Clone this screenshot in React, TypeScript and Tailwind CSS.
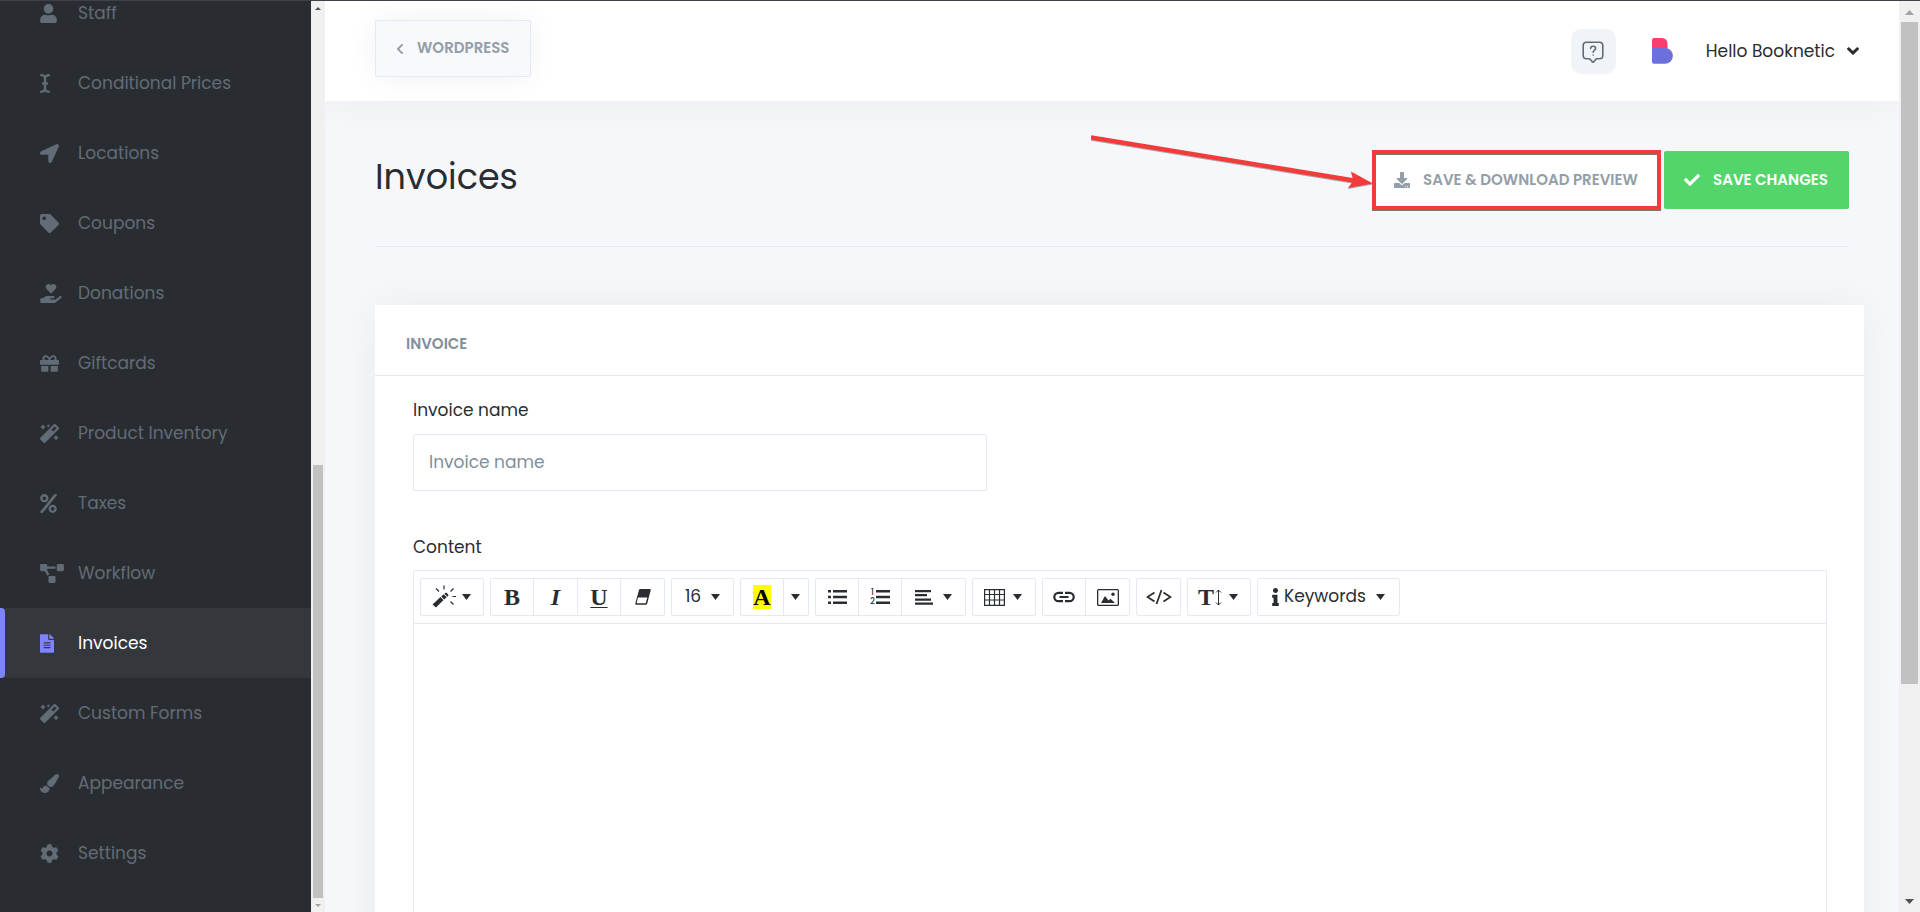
import type { ReactNode } from "react";
import type { IconType } from "react-icons";
import {
  FaAngleDown,
  FaCheck,
  FaChevronLeft,
  FaCog,
  FaDownload,
  FaFileAlt,
  FaGift,
  FaHandHoldingHeart,
  FaICursor,
  FaInfo,
  FaLocationArrow,
  FaMagic,
  FaPaintBrush,
  FaPercent,
  FaProjectDiagram,
  FaTag,
  FaUser,
} from "react-icons/fa";

const navItems: { label: string; icon: IconType; size: string; active?: boolean }[] = [
  { label: "Staff", icon: FaUser, size: "h-[19px] w-[17px]" },
  { label: "Conditional Prices", icon: FaICursor, size: "h-[19px] w-2.5" },
  { label: "Locations", icon: FaLocationArrow, size: "size-[19px]" },
  { label: "Coupons", icon: FaTag, size: "size-[19px]" },
  { label: "Donations", icon: FaHandHoldingHeart, size: "h-[19px] w-[22px]" },
  { label: "Giftcards", icon: FaGift, size: "size-[19px]" },
  { label: "Product Inventory", icon: FaMagic, size: "size-[19px]" },
  { label: "Taxes", icon: FaPercent, size: "h-[19px] w-[17px]" },
  { label: "Workflow", icon: FaProjectDiagram, size: "h-[19px] w-6" },
  { label: "Invoices", icon: FaFileAlt, size: "h-[19px] w-3.5", active: true },
  { label: "Custom Forms", icon: FaMagic, size: "size-[19px]" },
  { label: "Appearance", icon: FaPaintBrush, size: "size-[19px]" },
  { label: "Settings", icon: FaCog, size: "size-[19px]" },
];

function Sidebar() {
  return (
    <nav
      aria-label="Main"
      className="flex w-[311px] shrink-0 flex-col justify-end overflow-hidden bg-[#292d32] pb-6"
    >
      {navItems.map(({ label, icon: Icon, size, active }) => (
        <a
          key={label}
          href="#"
          aria-current={active ? "page" : undefined}
          className={
            active
              ? "relative flex h-[70px] shrink-0 items-center bg-[#34373c] pl-10 text-[17px] text-white"
              : "relative flex h-[70px] shrink-0 items-center pl-10 text-[17px] text-[#626c76]"
          }
        >
          {active && (
            <span className="absolute inset-y-0 left-0 w-[5px] rounded-r bg-[#7f83ff]" />
          )}
          <span className={active ? "w-[38px] text-[#7f83ff]" : "w-[38px]"}>
            <Icon className={size} />
          </span>
          <span className="pt-0.5">{label}</span>
        </a>
      ))}
    </nav>
  );
}

function Triangle({ up, className }: { up?: boolean; className: string }) {
  return (
    <svg
      viewBox="0 0 10 6"
      preserveAspectRatio="none"
      className={className}
      fill="currentColor"
      aria-hidden="true"
    >
      <path d={up ? "M0 6 5 0l5 6z" : "M0 0h10L5 6z"} />
    </svg>
  );
}

function SideScrollbar() {
  return (
    <div aria-hidden="true" className="flex w-3.5 shrink-0 flex-col items-center bg-[#f0f0f0]">
      <Triangle up className="my-1.5 h-[3px] w-1.5 text-[#505050]" />
      <div className="grow" />
      <div className="h-[433px] w-2.5 bg-[#c1c1c1]" />
      <Triangle className="mt-1.5 mb-[5px] h-[3px] w-1.5 text-[#a3a3a3]" />
    </div>
  );
}

function PageScrollbar() {
  return (
    <div aria-hidden="true" className="flex w-[21px] shrink-0 flex-col items-center bg-[#f0f0f0]">
      <Triangle up className="mt-[9px] mb-[7px] h-[5px] w-[9px] text-[#a3a3a3]" />
      <div className="h-[662px] w-[17px] bg-[#c1c1c1]" />
      <div className="grow" />
      <Triangle className="mb-2 h-[5px] w-[9px] text-[#505050]" />
    </div>
  );
}

function Header() {
  return (
    <header className="relative flex h-[100px] shrink-0 items-start justify-between bg-white pr-10 pl-[50px] shadow-[0_0_40px_rgba(0,0,0,0.05)]">
      <button
        type="button"
        className="mt-[19px] flex h-[57px] w-[156px] items-center rounded-xs border border-[#e3eaf3] bg-[#f8f9fd] pl-5 text-[15px] font-semibold text-[#939ea8] shadow-[0_0_30px_rgba(0,0,0,0.06)]"
      >
        <FaChevronLeft className="mr-[13px] h-3 w-2" />
        WORDPRESS
      </button>
      <div className="mt-7 flex items-center">
        <button
          type="button"
          aria-label="Help"
          className="flex size-[45px] items-center justify-center rounded-[10px] bg-[#f0f4f9] text-[#626c76]"
        >
          <svg
            viewBox="0 0 22 22"
            className="size-[22px]"
            fill="none"
            stroke="currentColor"
            strokeWidth="1.600"
            strokeLinecap="round"
            strokeLinejoin="round"
            aria-hidden="true"
          >
            <path d="M4.500 1.200h13c2 0 3.300 1.300 3.300 3.300v10c0 2-1.300 3.300-3.300 3.300h-2.600c-.5 0-.9.200-1.200.600l-1.700 2.200c-.5.700-1.500.700-2 0l-1.700-2.200c-.3-.3-.8-.6-1.200-.6H4.500c-2 0-3.300-1.300-3.300-3.300v-10c0-2 1.300-3.300 3.300-3.300z" />
            <path d="M8.600 7.400c.1-1.500 1.100-2.200 2.500-2.200s2.500.900 2.500 2.200c0 1.900-2.500 1.900-2.500 3.900" />
            <path d="M11.100 14v.1" />
          </svg>
        </button>
        <svg viewBox="0 0 21 26" className="mb-0.5 ml-9 h-[26px] w-[21px]" aria-hidden="true">
          <path d="M0 2a2 2 0 0 1 2-2h8a5.500 5.500 0 0 1 5.500 5.500V10.500H0z" fill="#fb3e6e" />
          <path d="M0 10h13a7.800 7.800 0 0 1 0 15.700H2a2 2 0 0 1-2-2z" fill="#6c70dc" />
        </svg>
        <button type="button" className="ml-[33px] flex items-center text-[17px] text-[#292d32]">
          Hello Booknetic
          <FaAngleDown className="mb-0.5 ml-3 h-5 w-3" />
        </button>
      </div>
    </header>
  );
}

function Arrow() {
  return (
    <svg
      viewBox="0 0 282 58"
      className="pointer-events-none absolute -top-[18px] right-full h-[58px] w-[282px] drop-shadow-[0_1px_0_#77777799]"
      aria-hidden="true"
    >
      <path d="M0 4.500 263 47.500" stroke="#f23c3c" strokeWidth="4.500" />
      <path d="M282 50.500 260 38.500l2.500 9-5.500 7.500z" fill="#f23c3c" />
    </svg>
  );
}

function TitleBar() {
  return (
    <div className="mr-[50px] ml-[50px] flex h-[146px] shrink-0 items-start justify-between border-b border-[#e3eaf5] pt-[50px]">
      <h1 className="text-[35px]/[52px] text-[#292d32]">Invoices</h1>
      <div className="flex gap-1">
        <div className="relative">
          <button
            type="button"
            className="flex h-[58px] w-[287px] items-center bg-white pl-[21px] text-[15px] font-semibold whitespace-nowrap text-[#939ea8]"
          >
            <FaDownload className="mr-[13px] size-4" />
            SAVE &amp; DOWNLOAD PREVIEW
          </button>
          <span className="pointer-events-none absolute -inset-px border-4 border-[#f23c3c] shadow-[0_1px_0_#777,inset_0_1px_0_#777]" />
          <Arrow />
        </div>
        <button
          type="button"
          className="flex h-[58px] w-[185px] items-center rounded-xs bg-[#53d56c] pl-5 text-[15px] font-semibold whitespace-nowrap text-white"
        >
          <FaCheck className="mr-[13px] size-4" />
          SAVE CHANGES
        </button>
      </div>
    </div>
  );
}

function Group({ children }: { children: ReactNode }) {
  return (
    <div className="flex divide-x divide-[#e3eaf5] rounded-xs border border-[#e3eaf5]">{children}</div>
  );
}

type ToolProps = { label: string; className: string; caret?: boolean; children?: ReactNode };

function Tool({ label, className, caret, children }: ToolProps) {
  return (
    <button
      type="button"
      aria-label={label}
      className={`flex h-9 items-center justify-center text-[17px] text-[#292d32] ${className}`}
    >
      {children}
      {caret && <Triangle className="h-1.5 w-[9px]" />}
    </button>
  );
}

function Glyph({ box, className, children }: { box: string; className: string; children: ReactNode }) {
  return (
    <svg viewBox={box} className={className} fill="currentColor" aria-hidden="true">
      {children}
    </svg>
  );
}

const serif = "font-['Liberation_Serif',serif] font-bold";

function Toolbar() {
  return (
    <div className="flex h-[53px] items-center gap-1.5 border-b border-[#e3eaf5] px-1.5">
      <Group>
        <Tool label="Style" className="w-[62px] gap-1.5 pr-0.5" caret>
          <Glyph box="0 0 24 24" className="size-6">
            <path d="M.5 19.500 8.500 12l3 3-7.500 7.500z M9.200 11.500l2.500-2.300 3 3-2.500 2.300z M12.400 8.800l1.200-1c.8-.6 3.400 2 2.800 2.800l-1 1.200z" />
            <path
              d="M4 3.500l3 3M12 .5v4M21.500 3.500l-3 3M20.500 11.500h4M18.500 16.500l3 3"
              stroke="currentColor"
              strokeWidth="1.200"
            />
          </Glyph>
        </Tool>
      </Group>
      <Group>
        <Tool label="Bold" className="w-[43px]">
          <span className={`${serif} text-[24px]/6`}>B</span>
        </Tool>
        <Tool label="Italic" className="w-11">
          <span className={`${serif} text-[24px]/6 italic`}>I</span>
        </Tool>
        <Tool label="Underline" className="w-[43px]">
          <span className={`${serif} text-[24px]/6 underline decoration-1 underline-offset-2`}>U</span>
        </Tool>
        <Tool label="Remove format" className="w-[43px]">
          <Glyph box="0 0 16 16" className="size-4">
            <path
              fillRule="evenodd"
              d="M5.500 0H14.500c1 0 1.400.500 1.200 1.300L12.200 14.500c-.2.800-.8 1.200-1.700 1.200H1.400C.5 15.700.100 15.200.300 14.400L3.900 1.200C4.100.400 4.700 0 5.500 0zM3 8.500 1.600 14.300h9.100L12.300 8.500z"
            />
          </Glyph>
        </Tool>
      </Group>
      <Group>
        <Tool label="Font size" className="w-[61px] gap-2.5" caret>
          16
        </Tool>
      </Group>
      <Group>
        <Tool label="Text color" className="w-[43px]">
          <span className={`${serif} bg-[#ff0] text-[24px]/6 text-black`}>A</span>
        </Tool>
        <Tool label="More colors" className="w-6 pr-0.5" caret />
      </Group>
      <Group>
        <Tool label="Unordered list" className="w-[43px]">
          <Glyph box="0 0 19 16" className="h-4 w-[19px]">
            <path d="M0 1h3v2.500H0zM0 6.800h3v2.500H0zM0 12.500h3V15H0zM5 1h14v2.500H5zM5 6.800h14v2.500H5zM5 12.500h14V15H5z" />
          </Glyph>
        </Tool>
        <Tool label="Ordered list" className="w-[43px]">
          <span className="flex items-center gap-px">
            <span className="flex flex-col text-[8px]/[9px] font-medium">
              <span>1</span>
              <span>2</span>
            </span>
            <Glyph box="0 0 14 16" className="h-4 w-3.5">
              <path d="M0 1h14v2.500H0zM0 6.800h14v2.500H0zM0 12.500h14V15H0z" />
            </Glyph>
          </span>
        </Tool>
        <Tool label="Paragraph" className="w-[63px] gap-2.5" caret>
          <Glyph box="0 0 18 16" className="h-4 w-[18px]">
            <path d="M0 1h16v2.200H0zM0 5h12v2.200H0zM0 9.500h16v2.200H0zM0 13.500h18v2.200H0z" />
          </Glyph>
        </Tool>
      </Group>
      <Group>
        <Tool label="Table" className="w-[62px] gap-2 pr-0.5" caret>
          <svg
            viewBox="0 0 21 17"
            className="h-[17px] w-[21px]"
            fill="none"
            stroke="currentColor"
            strokeWidth="1.200"
            aria-hidden="true"
          >
            <path d="M.6.600h19.800v15.800H.6zM.6 5.500h19.800M.6 11h19.800M5.500.600v15.800M10.500.600v15.800M15.500.600v15.800" />
          </svg>
        </Tool>
      </Group>
      <Group>
        <Tool label="Link" className="w-[43px]">
          <svg
            viewBox="0 0 22 12"
            className="h-3 w-[22px]"
            fill="none"
            stroke="currentColor"
            strokeWidth="2.200"
            aria-hidden="true"
          >
            <path d="M10 1.800H5.500a4.200 4.200 0 0 0 0 8.400H10M12 1.800h4.500a4.200 4.200 0 0 1 0 8.400H12M6.500 6h9" />
          </svg>
        </Tool>
        <Tool label="Picture" className="w-[43px]">
          <Glyph box="0 0 22 17" className="h-[17px] w-[22px]">
            <path
              fillRule="evenodd"
              d="M1.500 0h19A1.500 1.500 0 0 1 22 1.500v14a1.500 1.500 0 0 1-1.500 1.500h-19A1.500 1.500 0 0 1 0 15.500v-14A1.500 1.500 0 0 1 1.500 0zM1.300 1.300v14.400h19.400V1.300z"
            />
            <path d="M4 14l4-7 3.500 4.500 2-1.800L18 14z" />
            <circle cx="16" cy="5.300" r="1.700" />
          </Glyph>
        </Tool>
      </Group>
      <Group>
        <Tool label="Code view" className="w-[43px]">
          <svg
            viewBox="0 0 26 16"
            className="h-4 w-[26px]"
            fill="none"
            stroke="currentColor"
            strokeWidth="1.800"
            aria-hidden="true"
          >
            <path d="M8.500 3.500 1.500 8l7 4.500M17.500 3.500l7 4.500-7 4.500M15.500 1l-5 14" />
          </svg>
        </Tool>
      </Group>
      <Group>
        <Tool label="Line height" className="w-[62px] gap-[7px] pr-0.5" caret>
          <span className="flex items-center gap-px">
            <span className={`${serif} text-[24px]/6`}>T</span>
            <svg
              viewBox="0 0 7 17"
              className="h-[17px] w-[7px]"
              fill="none"
              stroke="currentColor"
              strokeWidth="1"
              aria-hidden="true"
            >
              <path d="M3.500 1v15M1 3.500 3.500 1 6 3.500M1 13.500 3.500 16 6 13.500" />
            </svg>
          </span>
        </Tool>
      </Group>
      <Group>
        <Tool label="Keywords" className="w-[141px] gap-2.5" caret>
          <span className="flex items-center gap-[5px]">
            <FaInfo className="h-[18px] w-[7px]" />
            Keywords
          </span>
        </Tool>
      </Group>
    </div>
  );
}

function InvoiceCard() {
  return (
    <section className="mt-[58px] mr-[35px] ml-[50px] flex grow flex-col bg-white shadow-[0_0_40px_rgba(0,0,0,0.05)]">
      <h2 className="flex h-[71px] shrink-0 items-center border-b border-[#e3eaf5] px-[31px] pt-2 text-[15px] font-semibold text-[#828f9a]">
        INVOICE
      </h2>
      <div className="flex grow flex-col pt-[22px] pr-[37px] pl-[38px] text-[17px] text-[#292d32]">
        <label htmlFor="invoice-name" className="leading-6">
          Invoice name
        </label>
        <input
          id="invoice-name"
          type="text"
          placeholder="Invoice name"
          className="mt-3 h-[57px] w-[574px] max-w-full shrink-0 rounded-xs border border-[#e3eaf5] px-[15px] pb-0.5 placeholder:text-[#828f9a]"
        />
        <label htmlFor="invoice-content" className="mt-11 leading-6">
          Content
        </label>
        <div className="mt-[11px] flex grow flex-col rounded-t-xs border border-b-0 border-[#e3eaf5]">
          <Toolbar />
          <textarea id="invoice-content" className="min-h-[420px] w-full grow resize-none p-3" />
        </div>
      </div>
    </section>
  );
}

export default function App() {
  return (
    <div className="flex h-screen overflow-hidden border-t border-[#3f404a] bg-[#f5f7fb] font-[Poppins,Inter,sans-serif]">
      <Sidebar />
      <SideScrollbar />
      <main className="flex min-w-0 grow flex-col overflow-hidden">
        <Header />
        <TitleBar />
        <InvoiceCard />
      </main>
      <PageScrollbar />
    </div>
  );
}
